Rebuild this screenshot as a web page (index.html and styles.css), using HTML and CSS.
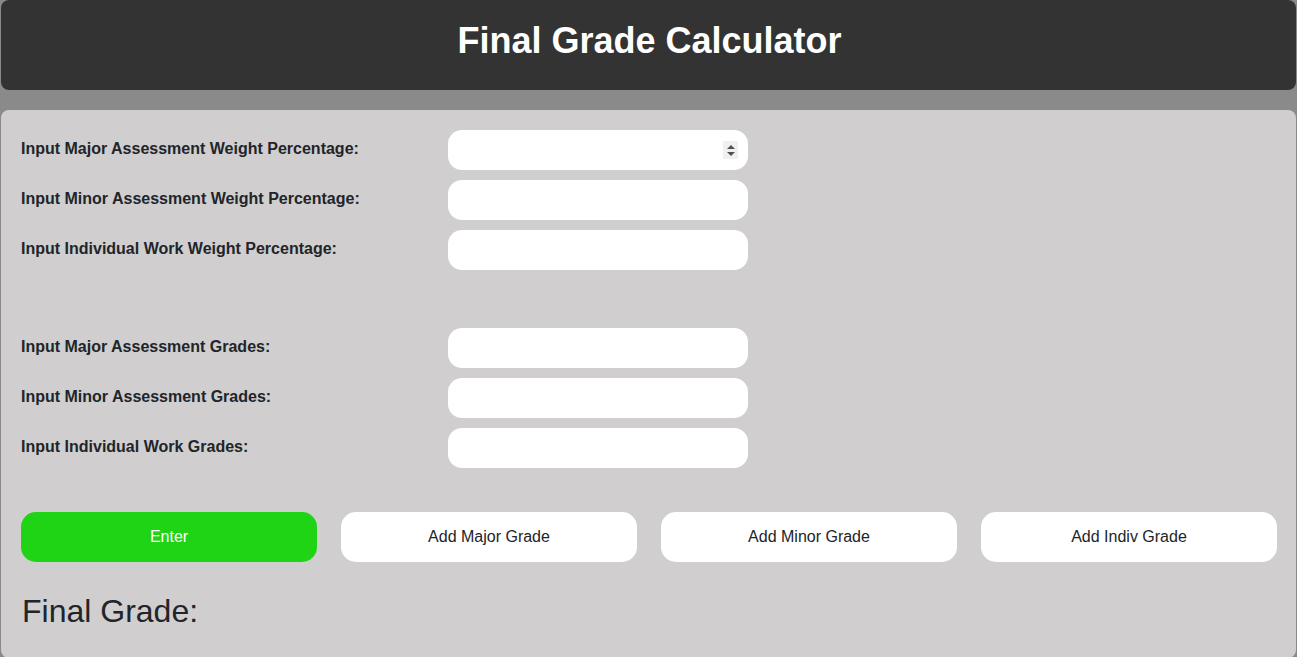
FILE: index.html
```html
<!DOCTYPE html>
<html>
<head>
<meta charset="utf-8">
<link rel="stylesheet" href="styles.css">
</head>
<body>
<div class="page">
  <header class="header">
    <h1 class="title">Final Grade Calculator</h1>
  </header>
  <main class="panel">
    <div class="group">
      <div class="row">
        <label class="label">Input Major Assessment Weight Percentage:</label>
        <div class="field">
          <input class="input" type="text">
          <span class="spin"><span class="up"></span><span class="down"></span></span>
        </div>
      </div>
      <div class="row">
        <label class="label">Input Minor Assessment Weight Percentage:</label>
        <div class="field"><input class="input" type="text"></div>
      </div>
      <div class="row">
        <label class="label">Input Individual Work Weight Percentage:</label>
        <div class="field"><input class="input" type="text"></div>
      </div>
    </div>
    <div class="group second">
      <div class="row">
        <label class="label">Input Major Assessment Grades:</label>
        <div class="field"><input class="input" type="text"></div>
      </div>
      <div class="row">
        <label class="label">Input Minor Assessment Grades:</label>
        <div class="field"><input class="input" type="text"></div>
      </div>
      <div class="row">
        <label class="label">Input Individual Work Grades:</label>
        <div class="field"><input class="input" type="text"></div>
      </div>
    </div>
    <div class="buttons">
      <button class="btn btn-enter">Enter</button>
      <button class="btn">Add Major Grade</button>
      <button class="btn">Add Minor Grade</button>
      <button class="btn">Add Indiv Grade</button>
    </div>
    <h2 class="result">Final Grade:</h2>
  </main>
</div>
</body>
</html>
```

FILE: styles.css
```css
html, body {
  margin: 0;
  padding: 0;
  height: 100%;
  overflow: hidden;
}
body {
  background: #8a8a8a;
  font-family: "Liberation Sans", Arial, sans-serif;
  color: #212529;
}
.page {
  padding: 0 1px;
  display: flex;
  flex-direction: column;
  gap: 20px;
}
.header {
  background: #333333;
  border-radius: 8px;
  height: 90px;
  display: flex;
  align-items: center;
  justify-content: center;
}
.title {
  margin: 0;
  color: #ffffff;
  font-size: 36px;
  font-weight: bold;
  line-height: 1;
  position: relative;
  top: -4px;
  left: 1px;
}
.panel {
  background: #d0cecf;
  border-radius: 8px;
  padding: 20px 19px 20px 20px;
  height: 548px;
  box-sizing: border-box;
}
.group {
  display: flex;
  flex-direction: column;
  gap: 10px;
}
.second {
  margin-top: 58px;
}
.row {
  display: grid;
  grid-template-columns: 427px 300px;
  align-items: center;
  height: 40px;
}
.label {
  font-size: 16px;
  font-weight: bold;
  color: #212529;
  position: relative;
  top: -1px;
}
.field {
  position: relative;
  height: 40px;
}
.input {
  box-sizing: border-box;
  width: 300px;
  height: 40px;
  border: none;
  border-radius: 14px;
  background: #ffffff;
  outline: none;
  padding: 0 12px;
  font-family: inherit;
  font-size: 16px;
}
.spin {
  position: absolute;
  left: 275px;
  top: 11px;
  width: 15px;
  height: 18px;
  background: #f0f0f0;
  display: flex;
  flex-direction: column;
  align-items: center;
  justify-content: center;
  gap: 3px;
}
.up {
  width: 0;
  height: 0;
  border-left: 4px solid transparent;
  border-right: 4px solid transparent;
  border-bottom: 4px solid #505050;
}
.down {
  width: 0;
  height: 0;
  border-left: 4px solid transparent;
  border-right: 4px solid transparent;
  border-top: 4px solid #505050;
}
.buttons {
  margin-top: 44px;
  display: grid;
  grid-template-columns: repeat(4, 296px);
  gap: 24px;
}
.btn {
  height: 50px;
  border: none;
  border-radius: 15px;
  background: #ffffff;
  color: #212529;
  font-family: "Liberation Sans", Arial, sans-serif;
  font-size: 16px;
  padding: 0;
}
.btn-enter {
  background: #1fd315;
  color: #ffffff;
}
.result {
  margin: 30px 0 0 1px;
  font-size: 32px;
  font-weight: normal;
  line-height: 38px;
  color: #212529;
}
```
